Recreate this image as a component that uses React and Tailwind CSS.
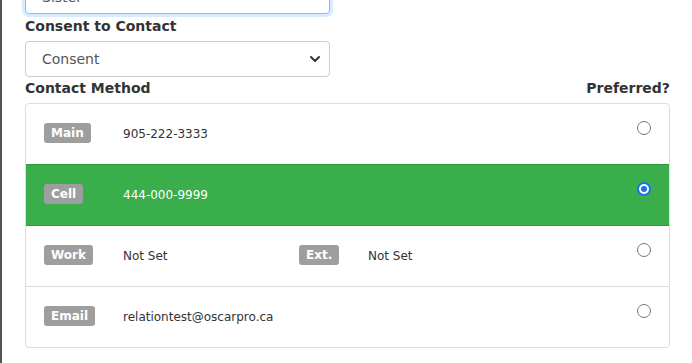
import { ChevronDown } from "lucide-react";

const rows = [
  { label: "Main", value: "905-222-3333", h: "h-[60px]" },
  { label: "Cell", value: "444-000-9999", active: true, h: "h-[62px] border-y border-[#2a9a3b] bg-[#39ae4b] text-white" },
  { label: "Work", value: "Not Set", ext: "Not Set", h: "h-[60px]" },
  { label: "Email", value: "relationtest@oscarpro.ca", h: "h-[61px] border-t border-[#ddd]" },
];

function Badge({ children }) {
  return (
    <span className="inline-flex h-[20px] items-center rounded-[3px] bg-[#9e9e9e] px-[7px] text-[12px] font-bold leading-none text-white">
      {children}
    </span>
  );
}

function Radio({ checked }) {
  if (checked) {
    return (
      <span className="block rounded-full bg-[#1a73e8] p-[2px]">
        <span className="block rounded-full bg-white p-[2px]">
          <span className="block h-[6px] w-[6px] rounded-full bg-[#1a73e8]"></span>
        </span>
      </span>
    );
  }
  return <span className="block h-[14px] w-[14px] rounded-full border border-[#767676] bg-white"></span>;
}

export default function App() {
  return (
    <div
      className="h-[363px] w-[692px] overflow-hidden border-l-2 border-[#555] bg-white text-[#333]"
      style={{ fontFamily: "'DejaVu Sans', Verdana, sans-serif" }}
    >
      <div className="pl-[23px] pr-[22px]">
        <div className="mt-[-22px] flex h-[36px] w-[305px] items-center rounded-[4px] border border-[#80bdff] px-[16px] pt-[2px] text-[14px] text-[#555] shadow-[0_0_0_3px_rgba(0,123,255,0.15)]">
          Sister
        </div>
        <div className="mt-[3px] text-[14px] font-bold leading-[18px] text-[#333]">Consent to Contact</div>
        <div className="mt-[6px] flex h-[36px] w-[305px] items-center justify-between rounded-[4px] border border-[#ccc] pl-[16px] pr-[6px] text-[14px] text-[#555]">
          <span>Consent</span>
          <ChevronDown size={16} strokeWidth={3} className="text-[#333]" />
        </div>
        <div className="mt-[2px] flex items-center justify-between text-[14px] font-bold leading-[18px] text-[#333]">
          <span>Contact Method</span>
          <span>Preferred?</span>
        </div>
        <div className="mt-[6px] overflow-hidden rounded-[4px] border border-[#ddd] text-[#333]">
          {rows.map((r) => (
            <div key={r.label} className={"flex items-center pl-[18px] pr-[18px] text-[12px] " + r.h}>
              <div className="-mt-[2px] w-[79px]">
                <Badge>{r.label}</Badge>
              </div>
              <div className="-mt-[1px] w-[176px]">{r.value}</div>
              {r.ext && (
                <>
                  <div className="-mt-[2px] w-[69px]">
                    <Badge>Ext.</Badge>
                  </div>
                  <div className="-mt-[1px]">{r.ext}</div>
                </>
              )}
              <div className="ml-auto -mt-[12px]">
                <Radio checked={r.active} />
              </div>
            </div>
          ))}
        </div>
      </div>
    </div>
  );
}
